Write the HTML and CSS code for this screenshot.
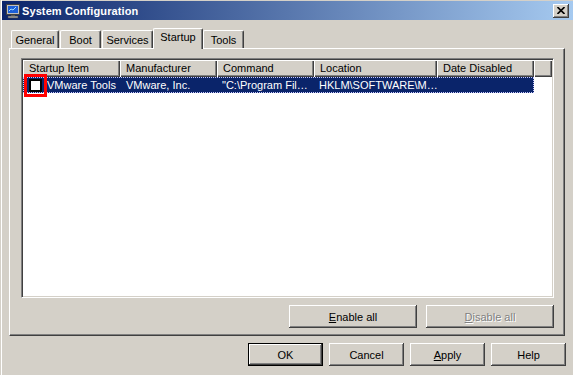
FILE: index.html
```html
<!DOCTYPE html>
<html lang="en">
  <head>
    <meta charset="UTF-8" />
    <title>System Configuration</title>
    <link rel="stylesheet" href="styles.css">
  </head>
  <body>
    <div class="window">
      <div class="titlebar">
        <svg class="app-icon" width="16" height="16" viewBox="0 0 16 16">
          <rect x="1.5" y="1.5" width="13" height="10" fill="#c0c0c0" stroke="#404040"></rect>
          <rect x="3" y="3" width="10" height="7" fill="#1c5fd8"></rect>
          <polyline points="4 8 6 6 8 7 11 4" fill="none" stroke="#9fe0ff" stroke-width="1"></polyline>
          <rect x="6" y="12" width="4" height="1" fill="#606060"></rect>
          <rect x="3" y="13" width="10" height="2" fill="#a0a0a0" stroke="#404040" stroke-width="0.5"></rect>
        </svg>
        <span class="title">System Configuration</span>
        <button class="close-btn" type="button">
          <svg width="8" height="7" viewBox="0 0 8 7">
            <path d="M0.5 0 L7.5 7 M7.5 0 L0.5 7" stroke="#000" stroke-width="1.6"></path>
          </svg>
        </button>
      </div>

      <div class="client">
        <div class="tabs">
          <div class="tab tab-general">General</div>
          <div class="tab tab-boot">Boot</div>
          <div class="tab tab-services">Services</div>
          <div class="tab tab-startup active">Startup</div>
          <div class="tab tab-tools">Tools</div>
        </div>

        <div class="panel">
          <div class="listview">
            <div class="lv-header">
              <div class="col col-item">Startup Item</div>
              <div class="col col-maker">Manufacturer</div>
              <div class="col col-cmd">Command</div>
              <div class="col col-loc">Location</div>
              <div class="col col-date">Date Disabled</div>
              <div class="col col-fill"></div>
            </div>
            <div class="lv-row selected">
              <div class="cell col-item">
                <span class="check">
                  <span class="highlight"></span>
                </span>
                VMware Tools
              </div>
              <div class="cell col-maker">VMware, Inc.</div>
              <div class="cell col-cmd">"C:\Program Fil…</div>
              <div class="cell col-loc">HKLM\SOFTWARE\M…</div>
              <div class="cell col-date"></div>
            </div>
          </div>

          <div class="panel-actions">
            <button class="btn wide" type="button"><u>E</u>nable all</button>
            <button class="btn wide disabled" type="button"><u>D</u>isable all</button>
          </div>
        </div>

        <div class="dialog-actions">
          <button class="btn default" type="button">OK</button>
          <button class="btn" type="button">Cancel</button>
          <button class="btn" type="button"><u>A</u>pply</button>
          <button class="btn" type="button">Help</button>
        </div>
      </div>
    </div>
  </body>
</html>
```

FILE: styles.css
```css
:root {
  --face: #d4d0c8;
  --shadow: #808080;
  --dark: #404040;
  --select: #0a246a;
}
body {
  margin: 0;
  background: var(--face);
  font-family: "Liberation Sans", Arial, sans-serif;
  font-size: 11px;
  color: #000;
}
.window {
  width: 573px;
  height: 375px;
  box-sizing: border-box;
  padding: 1px 0 0 2px;
  box-shadow: inset 1px 0 var(--face), inset 2px 0 #fff;
  overflow: hidden;
}
.titlebar {
  height: 19px;
  display: flex;
  align-items: center;
  background: linear-gradient(90deg, #0a246a 0%, #a6caf0 100%);
  padding-left: 3px;
}
.app-icon {
  flex: none;
}
.title {
  margin-left: 1px;
  color: #fff;
  font-weight: bold;
  font-size: 11px;
  letter-spacing: 0.1px;
}
.close-btn {
  margin-left: auto;
  margin-right: 4px;
  width: 16px;
  height: 14px;
  padding: 0;
  border: none;
  background: var(--face);
  display: flex;
  align-items: center;
  justify-content: center;
  box-shadow: inset -1px -1px var(--dark), inset 1px 1px #fff, inset -2px -2px var(--shadow);
}
.client {
  padding-left: 7px;
}
.tabs {
  display: flex;
  align-items: flex-end;
  height: 20px;
  margin-top: 8px;
  padding-left: 2px;
}
.tab {
  height: 18px;
  box-sizing: border-box;
  padding-top: 2px;
  line-height: 15px;
  text-align: center;
  border-top: 1px solid #fff;
  border-left: 1px solid #fff;
  border-right: 1px solid var(--dark);
  border-radius: 2px 2px 0 0;
  box-shadow: inset -1px 0 var(--shadow);
  margin-right: 1px;
}
.tab-general { width: 48px; }
.tab-boot { width: 41px; }
.tab-services { width: 51px; margin-right: 0; }
.tab-startup { width: 50px; margin-right: 0; }
.tab-tools { width: 41px; }
.tab.active {
  height: 21px;
  margin-bottom: -1px;
  padding-top: 1px;
  background: var(--face);
  position: relative;
  z-index: 1;
}
.panel {
  width: 556px;
  box-sizing: border-box;
  border-top: 1px solid #fff;
  border-left: 1px solid #fff;
  border-right: 1px solid var(--dark);
  border-bottom: 1px solid var(--dark);
  box-shadow: inset -1px -1px var(--shadow);
  padding: 9px 10px 7px 11px;
}
.listview {
  width: 533px;
  height: 240px;
  box-sizing: border-box;
  background: #fff;
  border-top: 1px solid var(--shadow);
  border-left: 1px solid var(--shadow);
  border-right: 1px solid #fff;
  border-bottom: 1px solid #fff;
  box-shadow: inset 1px 1px var(--dark), inset -1px -1px var(--face);
  padding: 1px;
}
.lv-header {
  display: flex;
  height: 17px;
}
.col {
  box-sizing: border-box;
  height: 17px;
  padding-left: 6px;
  line-height: 16px;
  background: var(--face);
  box-shadow: inset 1px 1px #fff, inset -1px -1px var(--dark), inset -2px -2px var(--shadow);
  white-space: nowrap;
  overflow: hidden;
}
.col-item { width: 97px; }
.col-maker { width: 97px; }
.col-cmd { width: 97px; }
.col-loc { width: 123px; }
.col-date { width: 97px; }
.col-fill { flex: 1; }
.lv-row {
  display: flex;
  width: 511px;
  height: 16px;
  box-sizing: border-box;
}
.lv-row.selected {
  background: var(--select);
  color: #fff;
  outline: 1px dotted #c8c8ff;
  outline-offset: -1px;
}
.cell {
  box-sizing: border-box;
  padding-left: 6px;
  line-height: 16px;
  white-space: nowrap;
  overflow: hidden;
  display: flex;
  align-items: center;
}
.col-cmd.cell {
  padding-left: 5px;
}
.col-loc.cell {
  padding-left: 5px;
}
.lv-row .col-item {
  overflow: visible;
}
.check {
  flex: none;
  width: 13px;
  height: 13px;
  box-sizing: border-box;
  border: 2px solid #000;
  background: #fff;
  margin-right: 5px;
  position: relative;
}
.highlight {
  position: absolute;
  left: -7px;
  top: -7px;
  width: 23px;
  height: 23px;
  box-sizing: border-box;
  border: 3px solid #f00;
}
.panel-actions {
  display: flex;
  justify-content: flex-end;
  gap: 9px;
  margin-top: 7px;
}
.btn {
  width: 75px;
  height: 23px;
  padding: 0;
  border: none;
  background: var(--face);
  font-family: inherit;
  font-size: 11px;
  color: #000;
  box-shadow: inset -1px -1px var(--dark), inset 1px 1px #fff, inset -2px -2px var(--shadow), inset 2px 2px var(--face);
}
.btn.wide {
  width: 128px;
}
.btn.disabled {
  color: var(--shadow);
  text-shadow: 1px 1px #fff;
}
.btn.default {
  border: 1px solid #000;
  box-shadow: inset -1px -1px var(--dark), inset 1px 1px #fff, inset -2px -2px var(--shadow);
}
.dialog-actions {
  display: flex;
  justify-content: flex-end;
  gap: 6px;
  margin-top: 7px;
  padding-right: 7px;
}
```
